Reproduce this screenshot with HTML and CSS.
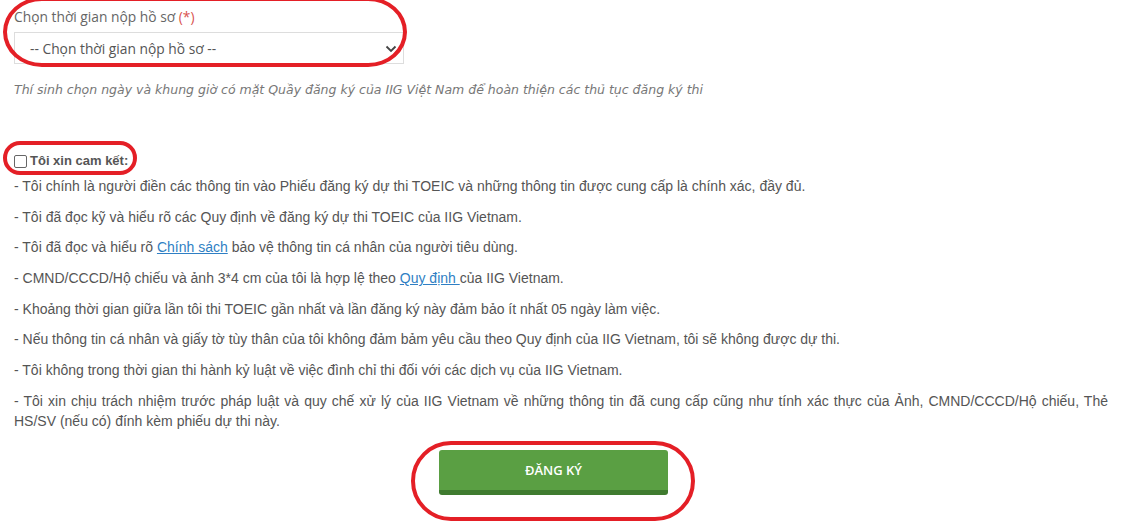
FILE: index.html
```html
<!DOCTYPE html>
<html lang="vi">
<head>
<meta charset="utf-8">
<title>Đăng ký dự thi</title>
<link rel="stylesheet" href="styles.css">
</head>
<body>
<div class="page">
  <div class="field">
    <label class="field-label">Chọn thời gian nộp hồ sơ <span class="req">(*)</span></label>
    <div class="select">
      <span>-- Chọn thời gian nộp hồ sơ --</span>
      <svg class="chev" width="12" height="8" viewBox="0 0 12 8"><path d="M1.5 1.5 L6 6 L10.5 1.5" fill="none" stroke="#444" stroke-width="1.8"/></svg>
    </div>
    <p class="hint">Thí sinh chọn ngày và khung giờ có mặt Quầy đăng ký của IIG Việt Nam để hoàn thiện các thủ tục đăng ký thi</p>
  </div>

  <div class="commit">
    <label class="commit-head"><span class="box"></span>Tôi xin cam kết:</label>
    <p>- Tôi chính là người điền các thông tin vào Phiếu đăng ký dự thi TOEIC và những thông tin được cung cấp là chính xác, đầy đủ.</p>
    <p>- Tôi đã đọc kỹ và hiểu rõ các Quy định về đăng ký dự thi TOEIC của IIG Vietnam.</p>
    <p>- Tôi đã đọc và hiểu rõ <a href="#">Chính sách</a> bảo vệ thông tin cá nhân của người tiêu dùng.</p>
    <p>- CMND/CCCD/Hộ chiếu và ảnh 3*4 cm của tôi là hợp lệ theo <a href="#">Quy định </a>của IIG Vietnam.</p>
    <p>- Khoảng thời gian giữa lần tôi thi TOEIC gần nhất và lần đăng ký này đảm bảo ít nhất 05 ngày làm việc.</p>
    <p>- Nếu thông tin cá nhân và giấy tờ tùy thân của tôi không đảm bảm yêu cầu theo Quy định của IIG Vietnam, tôi sẽ không được dự thi.</p>
    <p>- Tôi không trong thời gian thi hành kỷ luật về việc đình chỉ thi đối với các dịch vụ của IIG Vietnam.</p>
    <p class="justify">- Tôi xin chịu trách nhiệm trước pháp luật và quy chế xử lý của IIG Vietnam về những thông tin đã cung cấp cũng như tính xác thực của Ảnh, CMND/CCCD/Hộ chiếu, Thẻ HS/SV (nếu có) đính kèm phiếu dự thi này.</p>
  </div>

  <div class="actions">
    <button class="btn-submit" type="button">ĐĂNG KÝ</button>
  </div>

  <div class="mark mark-select"></div>
  <div class="mark mark-check"></div>
  <div class="mark mark-btn"></div>
</div>
</body>
</html>
```

FILE: styles.css
```css
* { box-sizing: border-box; }
html, body { margin: 0; padding: 0; background: #fff; }
body { font-family: "Liberation Sans", Arial, sans-serif; color: #555; font-size: 14px; }

.page {
  position: relative;
  width: 1121px;
  min-height: 527px;
  padding: 7px 13px 0 14px;
  overflow: hidden;
}

.field-label {
  display: block;
  font-family: "Open Sans", "Liberation Sans", sans-serif;
  font-size: 13.8px;
  line-height: 20px;
  color: #666;
  margin-bottom: 5px;
}
.req { color: #d9534f; }

.select {
  width: 390px;
  height: 32px;
  border: 1px solid #ddd;
  display: flex;
  align-items: center;
  justify-content: space-between;
  padding: 0 6px 0 15px;
  font-family: "Open Sans", "Liberation Sans", sans-serif;
  font-size: 13.8px;
  color: #555;
}
.chev { margin-top: 1px; }

.hint {
  margin: 16px 0 0;
  font-family: "DejaVu Sans", Verdana, sans-serif;
  font-style: italic;
  font-size: 12.5px;
  line-height: 20px;
  color: #777;
}

.commit { margin-top: 51px; }
.commit-head {
  display: flex;
  align-items: center;
  font-weight: bold;
  font-size: 13px;
  line-height: 20px;
  color: #555;
  margin-bottom: 5px;
}
.box {
  width: 13px;
  height: 13px;
  border: 1px solid #666;
  border-radius: 2px;
  margin-right: 3px;
  background: #fff;
}
.commit p {
  margin: 0 0 10.7px;
  line-height: 20px;
}
.commit p.justify { text-align: justify; }
.commit a { color: #2f7fc4; text-decoration: underline; }

.actions { margin-top: 19px; padding-left: 425px; }
.btn-submit {
  width: 229px;
  height: 45px;
  border: 0;
  border-bottom: 5px solid #3f7b2f;
  border-radius: 3px;
  background: #5a9f43;
  color: #fff;
  font-family: "Open Sans", "Liberation Sans", sans-serif;
  font-weight: 600;
  font-size: 13px;
  padding: 0;
  cursor: pointer;
}

.mark {
  position: absolute;
  border: 4.5px solid #e41f26;
  pointer-events: none;
}
.mark-select { left: 3px; top: -3px; width: 404px; height: 70px; border-radius: 40px / 36px; }
.mark-check { left: 3px; top: 141px; width: 134px; height: 34px; border-radius: 17px; }
.mark-btn { left: 411px; top: 441px; width: 284px; height: 80px; border-radius: 40px; }
```
